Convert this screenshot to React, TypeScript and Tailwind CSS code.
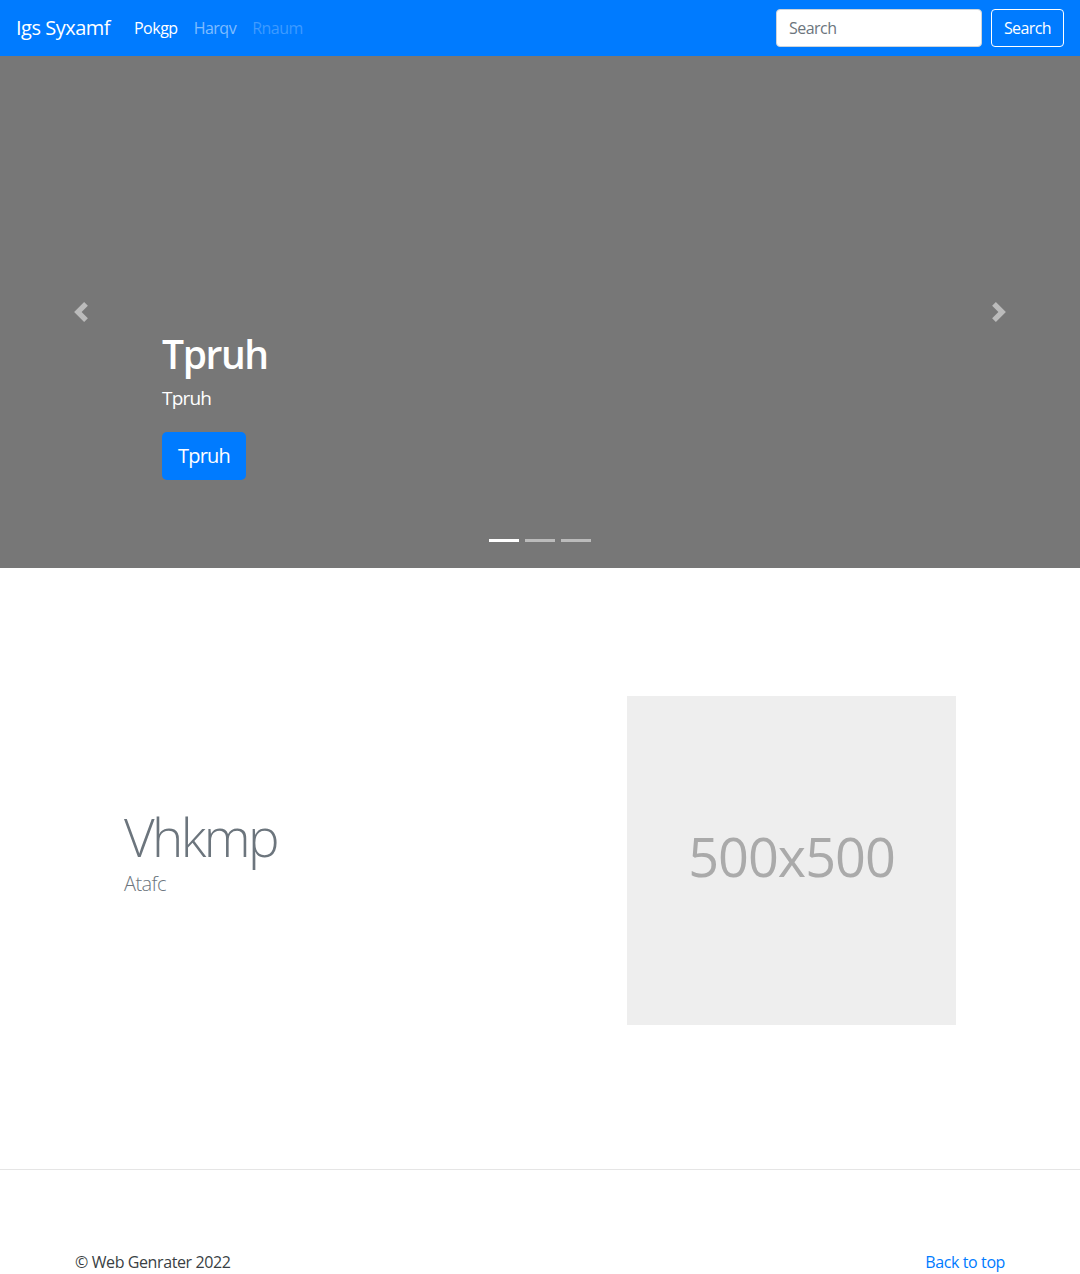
import React from "react";

const font = { fontFamily: '"Open Sans", "Noto Sans", sans-serif' };

function Prev() {
  return (
    <svg width="20" height="20" viewBox="0 0 8 8" fill="#bbbbbb">
      <path d="M5.25 0l-4 4 4 4 1.5-1.5L4.25 4l2.5-2.5L5.25 0z" />
    </svg>
  );
}
function Next() {
  return (
    <svg width="20" height="20" viewBox="0 0 8 8" fill="#bbbbbb">
      <path d="M2.75 0l-1.5 1.5L3.75 4l-2.5 2.5L2.75 8l4-4-4-4z" />
    </svg>
  );
}

export default function App() {
  return (
    <div className="w-[1080px] min-h-[1274px] bg-white text-[#212529]" style={font}>
      <nav className="h-14 bg-[#007bff] flex items-center px-4">
        <a className="text-white text-[20px] leading-[30px] mr-4 tracking-[-0.5px]">Igs Syxamf</a>
        <div className="flex items-center text-[16px] leading-6 tracking-[-0.5px]">
          <a className="px-2 text-white">Pokgp</a>
          <a className="px-2 text-white/50">Harqv</a>
          <a className="px-2 text-white/25">Rnaum</a>
        </div>
        <div className="ml-auto flex items-center">
          <div className="w-[206px] h-[38px] bg-white border border-[#ced4da] rounded-[4px] px-3 flex items-center text-[16px] text-[#6c757d] tracking-[-0.5px]">
            Search
          </div>
          <button className="ml-[9px] h-[38px] px-3 border border-white rounded-[4px] text-white text-[16px] tracking-[-0.6px]">
            Search
          </button>
        </div>
      </nav>

      <section className="relative h-[512px] bg-[#777777]">
        <div className="absolute left-0 top-0 h-full w-[162px] flex items-center justify-center">
          <Prev />
        </div>
        <div className="absolute right-0 top-0 h-full w-[162px] flex items-center justify-center">
          <Next />
        </div>
        <div className="pl-[162px] pt-[274px] text-white">
          <h1 className="text-[39px] leading-[48px] font-semibold mb-[5px] tracking-[-1.4px]">Tpruh</h1>
          <p className="text-[19px] leading-[30px] mb-[19px] tracking-[-0.8px]">Tpruh</p>
          <button className="h-12 px-4 bg-[#007bff] rounded-[5px] text-[20px] text-white tracking-[-0.8px]">Tpruh</button>
        </div>
        <div className="absolute left-0 right-0 bottom-[26px] flex justify-center">
          <span className="w-[30px] h-[3px] mx-[3px] bg-white" />
          <span className="w-[30px] h-[3px] mx-[3px] bg-white/50" />
          <span className="w-[30px] h-[3px] mx-[3px] bg-white/50" />
        </div>
      </section>

      <section className="pt-[128px] pb-[144px]">
        <div className="flex items-center">
          <div className="w-[627px] pl-[124px]">
            <h2 className="text-[53px] leading-[60px] font-light text-[#6c757d] tracking-[-2.6px]">Vhkmp</h2>
            <p className="mt-[2px] text-[20px] leading-[30px] font-light text-[#6c757d] tracking-[-0.6px] mb-[16px]">Atafc</p>
          </div>
          <div className="w-[329px] h-[329px] bg-[#eeeeee] flex items-center justify-center pb-2">
            <span className="text-[54px] text-[#aaaaaa] tracking-[-1px]">500x500</span>
          </div>
        </div>
      </section>

      <hr className="border-0 border-t border-black/10" />

      <footer className="pt-[80px] px-[75px] flex justify-between text-[16px] leading-6 tracking-[-0.4px]">
        <p className="text-[#3a3f44]">© Web Genrater 2022</p>
        <a className="text-[#007bff]">Back to top</a>
      </footer>
    </div>
  );
}
